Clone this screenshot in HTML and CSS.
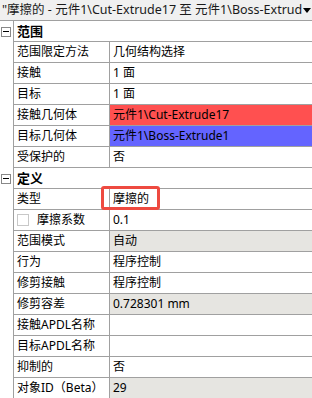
FILE: index.html
```html
<!DOCTYPE html>
<html lang="zh-CN">
<head>
  <meta charset="UTF-8" />
  <title>摩擦的 - 详细信息</title>
  <link rel="stylesheet" href="styles.css">
</head>
<body>
  <div class="panel">
    <div class="title">
      <span class="title-text">"摩擦的 - 元件1\Cut-Extrude17 至 元件1\Boss-Extrud</span>
      <span class="caret"></span>
    </div>

    <div class="row">
      <div class="gutter"><span class="toggle"></span></div>
      <div class="head">范围</div>
    </div>
    <div class="row">
      <div class="gutter"></div>
      <div class="label">范围限定方法</div>
      <div class="value">几何结构选择</div>
    </div>
    <div class="row">
      <div class="gutter"></div>
      <div class="label">接触</div>
      <div class="value">1 面</div>
    </div>
    <div class="row">
      <div class="gutter"></div>
      <div class="label">目标</div>
      <div class="value">1 面</div>
    </div>
    <div class="row">
      <div class="gutter"></div>
      <div class="label">接触几何体</div>
      <div class="value red">元件1\Cut-Extrude17</div>
    </div>
    <div class="row">
      <div class="gutter"></div>
      <div class="label">目标几何体</div>
      <div class="value blue">元件1\Boss-Extrude1</div>
    </div>
    <div class="row">
      <div class="gutter"></div>
      <div class="label">受保护的</div>
      <div class="value">否</div>
    </div>

    <div class="row">
      <div class="gutter"><span class="toggle"></span></div>
      <div class="head">定义</div>
    </div>
    <div class="row">
      <div class="gutter"></div>
      <div class="label">类型</div>
      <div class="value marked">摩擦的<span class="highlight"></span></div>
    </div>
    <div class="row">
      <div class="gutter"></div>
      <div class="label"><span class="check"></span>摩擦系数</div>
      <div class="value">0.1</div>
    </div>
    <div class="row">
      <div class="gutter"></div>
      <div class="label">范围模式</div>
      <div class="value grey">自动</div>
    </div>
    <div class="row">
      <div class="gutter"></div>
      <div class="label">行为</div>
      <div class="value">程序控制</div>
    </div>
    <div class="row">
      <div class="gutter"></div>
      <div class="label">修剪接触</div>
      <div class="value">程序控制</div>
    </div>
    <div class="row">
      <div class="gutter"></div>
      <div class="label">修剪容差</div>
      <div class="value grey">0.728301 mm</div>
    </div>
    <div class="row">
      <div class="gutter"></div>
      <div class="label">接触APDL名称</div>
      <div class="value"></div>
    </div>
    <div class="row">
      <div class="gutter"></div>
      <div class="label">目标APDL名称</div>
      <div class="value"></div>
    </div>
    <div class="row">
      <div class="gutter"></div>
      <div class="label">抑制的</div>
      <div class="value">否</div>
    </div>
    <div class="row">
      <div class="gutter"></div>
      <div class="label">对象ID（Beta）</div>
      <div class="value grey">29</div>
    </div>
  </div>
</body>
</html>
```

FILE: styles.css
```css
body {
  margin: 0;
  background: #ffffff;
  font-family: "Noto Sans", "Noto Sans CJK SC", sans-serif;
  font-size: 12px;
  color: #000000;
}

.panel {
  width: 312px;
  overflow: hidden;
}

.title {
  display: flex;
  align-items: center;
  height: 20px;
  background: #f0f0f0;
  border-bottom: 1px solid #a0a0a0;
  font-size: 12.5px;
  color: #1a1a1a;
}

.title-text {
  flex: 1;
  padding-left: 2px;
  white-space: nowrap;
  line-height: 20px;
}

.caret {
  width: 0;
  height: 0;
  margin: 0 3px 0 1px;
  border-left: 4px solid transparent;
  border-right: 4px solid transparent;
  border-top: 5px solid #000000;
}

.row {
  display: flex;
  height: 21px;
  line-height: 20px;
}

.gutter {
  width: 13px;
  flex: none;
  display: flex;
  justify-content: center;
  align-items: center;
}

.toggle {
  position: relative;
  box-sizing: border-box;
  width: 10px;
  height: 10px;
  margin-left: -1px;
  border: 1px solid #888888;
  background: #ffffff;
}

.toggle::after {
  content: "";
  position: absolute;
  left: 1px;
  right: 1px;
  top: 3px;
  height: 1px;
  background: #000000;
}

.head {
  flex: 1;
  border-left: 1px solid #a0a0a0;
  border-bottom: 1px solid #a0a0a0;
  padding-left: 3px;
  font-weight: bold;
  font-size: 13px;
}

.label {
  width: 92px;
  flex: none;
  display: flex;
  align-items: center;
  border-left: 1px solid #a0a0a0;
  border-right: 1px solid #a0a0a0;
  border-bottom: 1px solid #a0a0a0;
  padding-left: 3px;
  white-space: nowrap;
  overflow: hidden;
}

.value {
  position: relative;
  flex: 1;
  border-bottom: 1px solid #a0a0a0;
  padding-left: 3px;
  white-space: nowrap;
}

.red {
  background: #ff5050;
}

.blue {
  background: #6464ff;
}

.grey {
  background: #e6e5e1;
}

.check {
  box-sizing: border-box;
  width: 12px;
  height: 12px;
  margin-right: 8px;
  border: 1px solid #c8c8c8;
  background: #ffffff;
}

.highlight {
  position: absolute;
  left: -9px;
  top: -3px;
  width: 59px;
  height: 24px;
  box-sizing: border-box;
  border: 3px solid #ee4a40;
  border-radius: 3px;
}
```
